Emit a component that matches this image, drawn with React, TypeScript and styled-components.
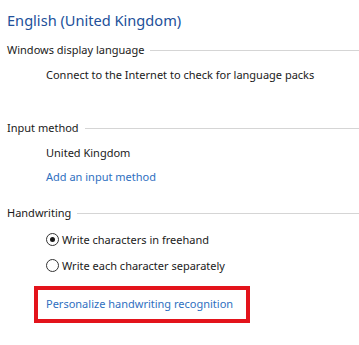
import styled, { createGlobalStyle } from "styled-components";

const GlobalStyle = createGlobalStyle`
  html, body {
    margin: 0;
    padding: 0;
    background: #ffffff;
  }
  body {
    font-family: "Noto Sans", "Open Sans", sans-serif;
    font-size: 11px;
    color: #1a1a1a;
  }
`;

const Page = styled.div`
  display: flex;
  flex-direction: column;
  width: 359px;
  height: 345px;
  padding: 9px 0 0 7px;
  box-sizing: border-box;
  overflow: hidden;
`;

const Title = styled.h1`
  margin: 0 0 8px 0;
  font-size: 14.6px;
  font-weight: 400;
  line-height: 22px;
  color: #22509a;
`;

const Section = styled.section<{ $gap?: number }>`
  display: flex;
  flex-direction: column;
  margin-bottom: ${(p) => p.$gap ?? 0}px;
`;

const Header = styled.div`
  display: flex;
  align-items: center;
  gap: 6px;
  line-height: 22px;

  &::after {
    content: "";
    flex: 1;
    height: 1px;
    margin-top: 1px;
    background: #d5d5d5;
  }
`;

const Items = styled.div<{ $top?: number }>`
  display: flex;
  flex-direction: column;
  padding-left: 39px;
  padding-top: ${(p) => p.$top ?? 1}px;
`;

const Row = styled.div<{ $h?: number }>`
  display: flex;
  align-items: center;
  height: ${(p) => p.$h ?? 25}px;
`;

const Link = styled.a`
  color: #2f6fbf;
  text-decoration: none;
  cursor: pointer;
`;

const Radio = styled.span<{ $checked?: boolean }>`
  position: relative;
  display: inline-block;
  width: 11px;
  height: 11px;
  margin-right: 3px;
  border: 1px solid #333333;
  border-radius: 50%;
  box-sizing: content-box;

  &::after {
    content: "";
    display: ${(p) => (p.$checked ? "block" : "none")};
    position: absolute;
    left: 3px;
    top: 3px;
    width: 5px;
    height: 5px;
    border-radius: 50%;
    background: #1a1a1a;
  }
`;

const Highlight = styled.div`
  align-self: flex-start;
  margin: 8px 0 0 27px;
  padding: 6px 13px 8px 8px;
  border: 4px solid #e3131b;
`;

export default function App() {
  return (
    <>
      <GlobalStyle />
      <Page>
        <Title>English (United Kingdom)</Title>

        <Section $gap={30}>
          <Header>Windows display language</Header>
          <Items>
            <Row>Connect to the Internet to check for language packs</Row>
          </Items>
        </Section>

        <Section $gap={13}>
          <Header>Input method</Header>
          <Items>
            <Row $h={24}>United Kingdom</Row>
            <Row>
              <Link>Add an input method</Link>
            </Row>
          </Items>
        </Section>

        <Section>
          <Header>Handwriting</Header>
          <Items $top={2}>
            <Row $h={26}>
              <Radio $checked />
              Write characters in freehand
            </Row>
            <Row $h={26}>
              <Radio />
              Write each character separately
            </Row>
          </Items>
        </Section>

        <Highlight>
          <Link>Personalize handwriting recognition</Link>
        </Highlight>
      </Page>
    </>
  );
}
